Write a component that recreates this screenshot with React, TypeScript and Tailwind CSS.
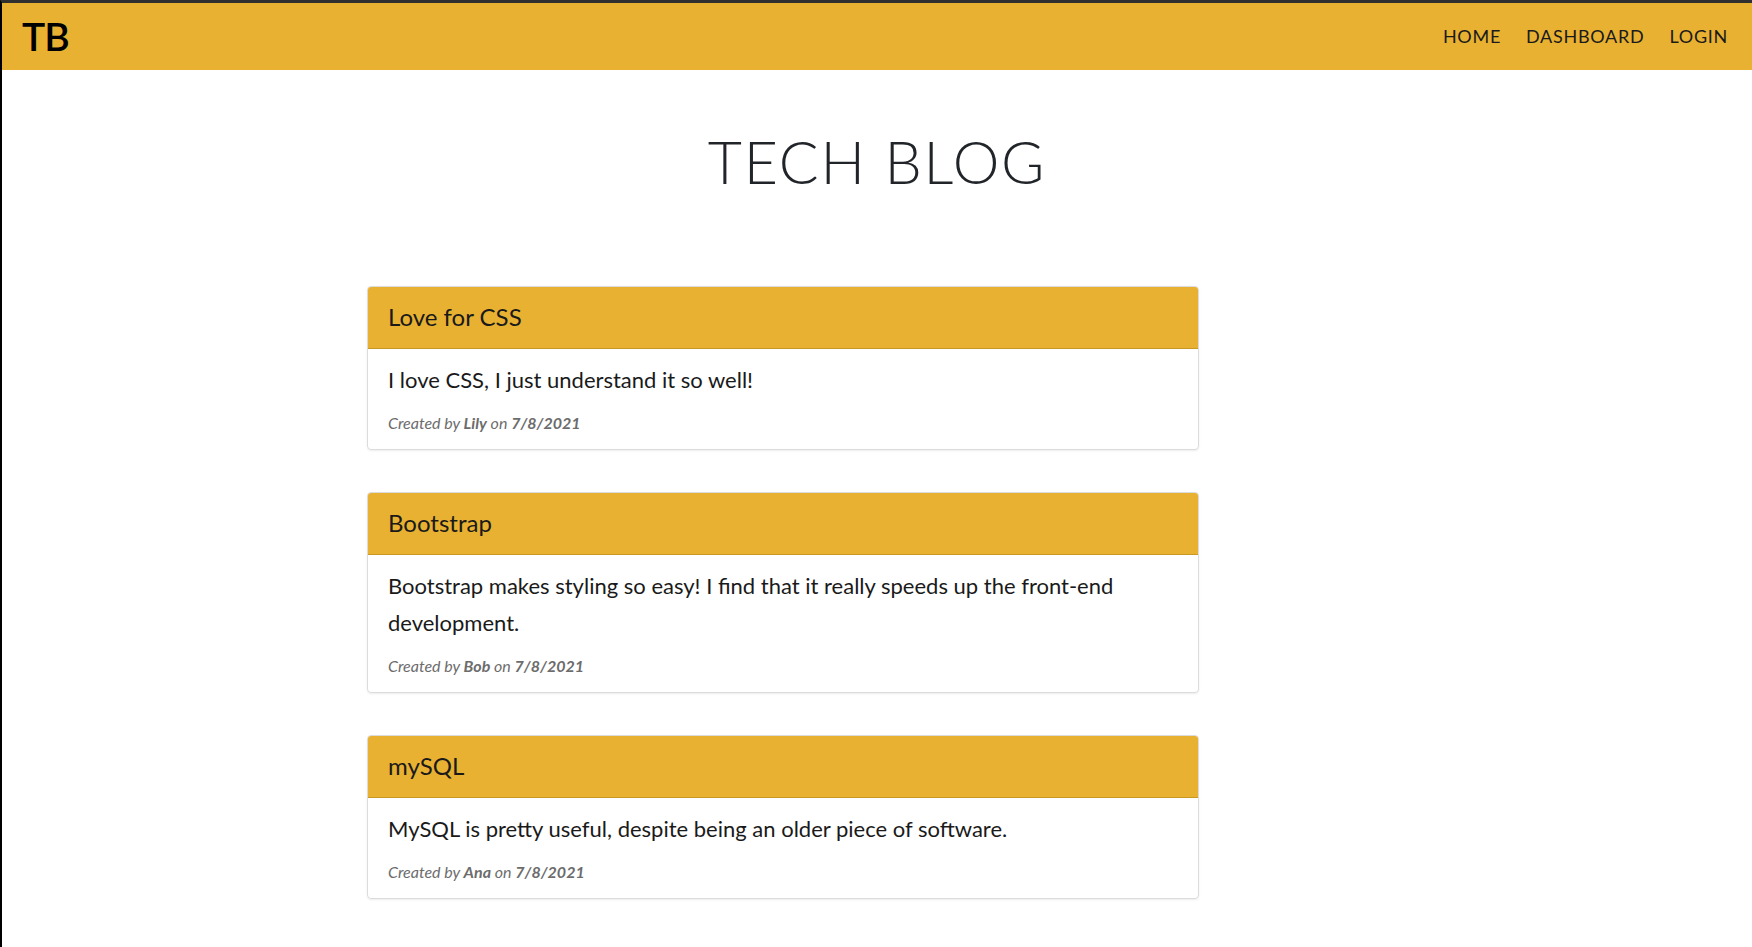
const posts = [
  {
    id: 1,
    title: 'Love for CSS',
    body: 'I love CSS, I just understand it so well!',
    author: 'Lily',
    date: '7/8/2021',
  },
  {
    id: 2,
    title: 'Bootstrap',
    body: 'Bootstrap makes styling so easy! I find that it really speeds up the front-end development.',
    author: 'Bob',
    date: '7/8/2021',
  },
  {
    id: 3,
    title: 'mySQL',
    body: 'MySQL is pretty useful, despite being an older piece of software.',
    author: 'Ana',
    date: '7/8/2021',
  },
];

export default function App() {
  return (
    <div className="min-h-[947px] bg-white border-t-[3px] border-t-[#2f2f2f] border-l-2 border-l-black font-['Lato',_sans-serif] text-[#212529]">
      <nav className="h-[67px] bg-[#e8b132] flex items-center justify-between pl-5 pr-6">
        <span className="text-[39px] font-semibold text-black leading-none tracking-tight">TB</span>
        <ul className="flex items-center gap-[25px] text-[18px] tracking-[0.04em] text-[#1a1a1a]">
          <li>HOME</li>
          <li>DASHBOARD</li>
          <li>LOGIN</li>
        </ul>
      </nav>

      <header className="pt-[57px] pb-[88px] text-center">
        <h1 className="text-[59px] font-light leading-[1.2] tracking-[0.03em] text-[#212529]">TECH BLOG</h1>
      </header>

      <main className="ml-[365px] w-[832px] flex flex-col gap-[42px]">
        {posts.map((post) => (
          <article
            key={post.id}
            className="border border-[#dcdcdc] rounded-[4px] overflow-hidden shadow-[0_1px_2px_rgba(0,0,0,0.08)]"
          >
            <div className="h-[62px] bg-[#e8b132] border-b border-b-[#c99824] flex items-center px-5">
              <h2 className="text-[24px] text-[#1a1a1a]">{post.title}</h2>
            </div>
            <div className="px-5 pt-[12px] pb-[14px]">
              <p className="text-[22px] leading-[37px] text-[#1a1a1a]">{post.body}</p>
              <p className="mt-[12px] text-[16px] italic text-[#6c6c6c] leading-[25px]">
                Created by <span className="font-bold">{post.author}</span> on{' '}
                <span className="font-bold">{post.date}</span>
              </p>
            </div>
          </article>
        ))}
      </main>
    </div>
  );
}
